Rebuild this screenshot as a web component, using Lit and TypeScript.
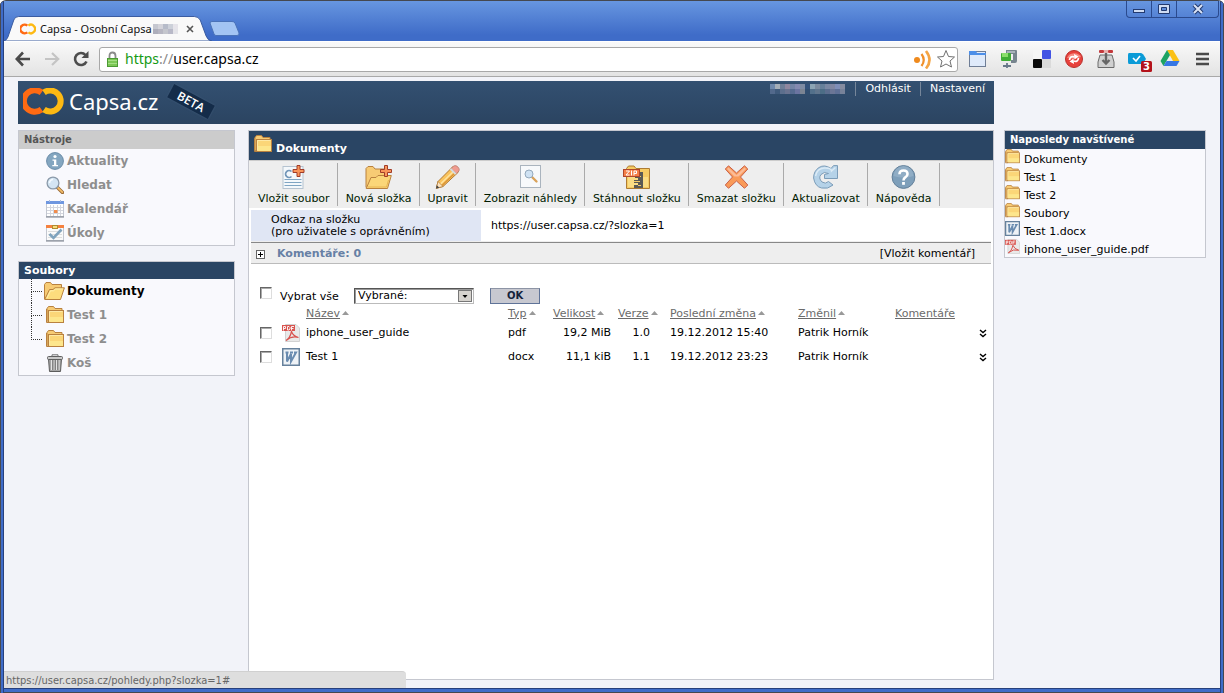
import { LitElement, html, svg, css } from "lit";
import { customElement } from "lit/decorators.js";

type Icon = keyof typeof glyphs;

const folderShape = svg`
  <path d="M1 16V2.5L2.5 .5H7.5L9 2.5H16V4" fill="#f7cb74" stroke="#b9813f"/>
  <path d="M.5 16.5V3M.5 16.5H3" stroke="#b9813f"/>
  <rect x="2.5" y="4.5" width="15" height="12" fill="#fbd678" stroke="#b9813f"/>
  <path d="M3.5 15.5V5.5H16.5" fill="none" stroke="#fee9a6"/>
  <rect x="4" y="11" width="13" height="5" fill="#fff09a" opacity=".6"/>`;

const lensShape = svg`
  <path d="M11 11L16.5 16.5" stroke="#9a6a35" stroke-width="3.4" stroke-linecap="round"/>
  <path d="M11.8 11.6L16.3 16.1" stroke="#f3bd69" stroke-width="1.8" stroke-linecap="round"/>
  <circle cx="7" cy="7" r="5.9" fill="#d4e5f3" stroke="#8b9aa9" stroke-width="1.3"/>
  <path d="M3.5 7A3.5 3.5 0 0 1 7 3.5" stroke="#f6fbff" stroke-width="1.5" fill="none"/>`;

const plusShape = svg`<path d="M15.500 .5h3v4h4v3h-4v4h-3v-4h-4v-3h4z" fill="#f9955a" stroke="#a13c28"/>`;

const glyphs = {
  folder: { box: "0 0 18 18", art: folderShape },
  open: {
    box: "0 0 21 18",
    art: svg`<path d="M.5 17V2.5L2 .5H6.500L8 2.500H17.500V7" fill="#f7cb74" stroke="#b9813f"/>
      <path d="M.7 17.500L5.500 7.500H9L11 5.800H20.400L16.500 17.500Z" fill="#fddc7d" stroke="#b9813f"/>
      <path d="M3 16L6.500 8.800H9.500L11.500 7H19" fill="none" stroke="#fff0b0"/>`,
  },
  info: {
    box: "0 0 18 18",
    art: svg`<circle cx="9" cy="9" r="8.400" fill="#84a6c0" stroke="#6a8ca8"/>
      <circle cx="9" cy="4.500" r="1.600" fill="#fff"/>
      <path d="M6.500 7.500H10.300V13H12V14.300H6.300V13H8V8.700H6.500Z" fill="#fff"/>`,
  },
  lens: { box: "0 0 18 18", art: lensShape },
  calendar: {
    box: "0 0 18 18",
    art: svg`<rect x=".5" y="1.500" width="17" height="15" fill="#fff" stroke="#c3c7d0"/>
      <rect y="1" width="18" height="3" fill="#6f97e0"/><path d="M3.500 0v2M14.500 0v2" stroke="#a8b9df"/>
      <path d="M1 7.500h16M1 10.500h16M1 13.500h16M4.500 5v11M7.500 5v11M11.500 5v11M14.500 5v11" stroke="#d4d6de"/>
      <rect x="8" y="10" width="3.500" height="3" fill="#f08b4c"/><path d="M0 17h18" stroke="#777c88"/>`,
  },
  tasks: {
    box: "0 0 18 18",
    art: svg`<rect x=".5" y="1.500" width="17" height="15" fill="#fafafa" stroke="#c3c7d0"/>
      <rect y="1" width="18" height="3" fill="#f5813f"/><path d="M2 7.500h14M2 10.500h14M2 13.500h14" stroke="#ddd"/>
      <rect x="6.500" y="1.500" width="5" height="3" fill="#f7dc7d" stroke="#b08b32"/>
      <path d="M3.500 10L7.500 14L15.500 5.500" fill="none" stroke="#7fa3bd" stroke-width="2.600"/>
      <path d="M0 17h18" stroke="#777c88"/>`,
  },
  trash: {
    box: "0 0 18 18",
    art: svg`<path d="M2.500 5H15.500L14.500 17.500H3.500Z" fill="#a5a5a5" stroke="#5c5c5c"/>
      <path d="M5.500 6v10M8 6v10M10.500 6v10M13 6v10" stroke="#e3e3e3"/>
      <path d="M6.800 6v10M9.300 6v10M11.800 6v10" stroke="#777"/>
      <rect x="1.500" y="2.500" width="15" height="3" rx="1" fill="#c9c9c9" stroke="#606060"/>
      <path d="M6 2.500V.8H12V2.500" fill="none" stroke="#707070"/>`,
  },
  upload: {
    box: "0 0 24 24",
    art: svg`<rect x="1.500" y="1.500" width="20" height="22" fill="#f4f8fb" stroke="#b5c3d0"/>
      <path d="M10 6.500A3.500 3.500 0 1 0 10 11.500" fill="none" stroke="#7296b8" stroke-width="1.700"/>
      <path d="M3 14.500h17M3 17.500h17M3 20.500h17" stroke="#7fa5c3"/>${plusShape}`,
  },
  newfolder: {
    box: "0 0 27 24",
    art: svg`<path d="M1 22.500V3.500L3 1.500H8L10 4H21V10" fill="#f7cb74" stroke="#b9813f"/>
      <path d="M1.200 23.500L6 12.500H11L13 10.500H26.300L22.500 23.500Z" fill="#fbd678" stroke="#b9813f"/>
      <path d="M3 22H21.500L23.500 15" fill="none" stroke="#e8b552"/>
      <g transform="translate(4 0)">${plusShape}</g>`,
  },
  pencil: {
    box: "0 0 24 24",
    art: svg`<path d="M.8 23.300L2.500 16.500L17.500 1.500L23 7L7.500 21.500Z" fill="#fac35c" stroke="#b07a35"/>
      <path d="M5 19L20 4.500" stroke="#fde3a0" stroke-width="1.500"/><path d="M6.500 20.500L21.500 6" stroke="#d99336" stroke-width="1.200"/>
      <path d="M15.500 3.500L18.500 .8Q20.500 0 22.500 2T23.500 6L20.800 8.700Z" fill="#f09c90" stroke="#b4786c" stroke-width=".7"/>
      <path d="M14.300 4.600L15.800 3.200L21 8.400L19.500 9.800Z" fill="#d5dbe0"/>
      <path d="M.8 23.300L2.500 16.500L7.500 21.500Z" fill="#fbe3c0" stroke="#b07a35" stroke-width=".7"/><path d="M.5 23.500L1.300 20.300L3.800 22.700Z" fill="#444"/>`,
  },
  preview: {
    box: "0 0 21 24",
    art: svg`<rect x=".5" y=".5" width="20" height="22" fill="#f7f9fb" stroke="#aab4be"/>
      <path d="M12 12L16.500 16.500" stroke="#d9a25a" stroke-width="2.400" stroke-linecap="round"/>
      <circle cx="9" cy="9" r="4" fill="#cfe2f3" stroke="#94a9bd"/>`,
  },
  zip: {
    box: "0 0 27 24",
    art: svg`<path d="M3.500 23V3.500L5.500 1H11L13 3.500H26.500V23.500H3.500Z" fill="#f6cb63" stroke="#ae7c33"/>
      <rect x="5" y="12" width="20" height="10" fill="#fbdd84"/>
      <path d="M12 7h8v16h-9v-3h4v-2h-4v-3h4v-2h-3z" fill="#5b5a55"/>
      <path d="M15 11.500h3M11 16.500h6M15 20.500h3" stroke="#f6cb63"/>
      <rect x=".5" y="4.500" width="16" height="7" fill="#f47f47" stroke="#b0472b"/>
      <path d="M3 6h3.500L3 10h3.500M8.500 5.500v5M11 10.500v-4.500h2.500v2.500h-2.500" fill="none" stroke="#fff"/>`,
  },
  cross: {
    box: "0 0 24 24",
    art: svg`<path d="M4 .8L12 8L20 .8L23.300 4L16 12L23.300 20L20 23.300L12 16L4 23.300L.8 20L8 12L.8 4Z" fill="#f99a58" stroke="#c9614a"/>
      <path d="M4 2.500L12 10L20 2.500L21.500 4L14 11.500H10L2.500 4Z" fill="#fcbc98"/>`,
  },
  refresh: {
    box: "0 0 25 24",
    art: svg`<path d="M24.500 .6V13.500H11.500V9.500L15.500 8.500Q11 6 8 9.500T9 17Q12.500 19.500 15.500 16.500L20 20Q15 24.500 8.500 23T.6 13Q.6 6 6 2.500T18 3.500L20.500 .6Z" fill="#b5d2e8" stroke="#7b9cb8"/>
      <path d="M2.500 11Q4 3.500 11 3T18.500 6L22.500 2.500" fill="none" stroke="#dcebf6" stroke-width="1.500"/>`,
  },
  help: {
    box: "0 0 24 24",
    art: svg`<circle cx="12" cy="12" r="11.400" fill="#7e9fba" stroke="#627f99"/>
      <path d="M2 11A10 10 0 0 1 22 11Q12 14 2 11Z" fill="#9db8cd" opacity=".6"/>
      <path d="M8 9.200Q8 5.500 12 5.500T16 9Q16 11 14 12.200T12 15.500" fill="none" stroke="#fff" stroke-width="2.600"/>
      <rect x="10.600" y="17" width="2.800" height="2.800" fill="#fff"/>`,
  },
  pdf: {
    box: "0 0 18 18",
    art: svg`<path d="M3.500 .5H14L17.500 4V17.500H3.500Z" fill="#e9e9e9" stroke="#d2d2d2"/>
      <path d="M4 16.500Q8 14.500 9.500 7.500Q11 12 16.500 13.500Q10 11.500 4 16.500Z" fill="none" stroke="#d8524e" stroke-width="1.200"/>
      <rect y="1" width="13" height="6" fill="#d9544f"/>
      <path d="M1.500 6.500v-4h2v2h-2M5.500 2.500v3.500h1.500l1-1v-1.500l-1-1zM9.500 6.500v-4h2.500M9.500 4.500h2" fill="none" stroke="#fff" stroke-width=".9"/>`,
  },
  word: {
    box: "0 0 18 18",
    art: svg`<rect x=".75" y=".75" width="16.500" height="16.500" fill="#eef2f6" stroke="#66819c" stroke-width="1.500"/>
      <path d="M3.500 4.500h3M5 4.500V13.500L9 6V13.500L14 4.500h-2M8 4.500h3" fill="none" stroke="#6a8cb0" stroke-width="2"/>`,
  },
};

const icon = (name: Icon, cls = "i18") =>
  html`<svg class=${cls} viewBox=${glyphs[name].box} fill="none" aria-hidden="true">${glyphs[name].art}</svg>`;

const rings = svg`
  <path d="M18.500 4.500A11 10.700 0 1 0 18.500 21.500" fill="none" stroke="#ff6a13" stroke-width="6"/>
  <path d="M21 4.500A10.500 10.500 0 1 1 21 21.500" fill="none" stroke="#fdb913" stroke-width="6"/>`;

const mosaic = (colors: string[], cols: number) => svg`${colors.map(
  (c, i) => svg`<rect x=${(i % cols) * 5} y=${Math.floor(i / cols) * 5} width="5" height="5" fill=${c}/>`
)}`;

@customElement("browser-chrome")
export class BrowserChrome extends LitElement {
  static styles = css`
    :host { display: block; font: 11px/14px "DejaVu Sans Condensed", "DejaVu Sans", sans-serif; color: #111; }
    svg { display: block; flex: none; }
    .strip { display: flex; height: 40px; background: linear-gradient(#6796e0, #3f6cc8 85%); }
    .tab { position: relative; display: flex; align-items: center; width: 208px; height: 25px; margin-top: 15px; padding: 0 18px 0 16px; box-sizing: border-box; }
    .tab > * { position: relative; }
    .tab > .shape { position: absolute; inset: 0; width: 100%; height: 100%; }
    .title { margin-left: 4px; white-space: nowrap; font: 11px/14px "Noto Sans", sans-serif; }
    .blur { margin-left: 1px; }
    button { border: 0; padding: 0; background: none; font: inherit; color: inherit; display: flex; align-items: center; justify-content: center; }
    .close { margin-left: auto; }
    .new { margin: 19px 0 0 -4px; align-self: flex-start; }
    .win { display: flex; margin-left: auto; margin-right: 1px; height: 17px; box-sizing: border-box; border: 1px solid #2a4a8e; border-top: 0; border-radius: 0 0 4px 4px; }
    .win button { width: 25px; box-sizing: border-box; border-right: 1px solid #2a4a8e; }
    .win button:last-child { width: 41px; border-right: 0; }
    .bar { display: flex; align-items: center; height: 36px; box-sizing: border-box; padding: 0 8px 0 11px; border-top: 1px solid #fff; border-bottom: 1px solid #a9a9a9; background: linear-gradient(#f9f9f9, #e3e3e3); }
    .nav { display: flex; gap: 13px; width: 84px; }
    .address { display: flex; align-items: center; flex: 1; height: 25px; box-sizing: border-box; padding: 0 1px 0 6px; border: 1px solid #a8a8a8; border-radius: 3px; background: #fff; }
    .field { display: flex; flex: 1; margin-left: 6px; font: 14px/18px "Noto Sans", sans-serif; }
    .url { color: #000; white-space: nowrap; }
    .scheme { color: #159a15; }
    .sep { color: #8a8a8a; }
    .star { margin-left: 3px; }
    .ext { display: flex; align-items: center; gap: 12px; margin-left: 10px; }
    .ext svg { overflow: visible; }
  `;
  render() {
    return html`
      <div class="strip">
        <div class="tab" role="tab">
          <svg class="shape" viewBox="0 0 212 25" preserveAspectRatio="none"><path d="M0 25Q3 24 4 21L10 4Q11 .5 15 .5H194Q198 .5 200 4L206 20Q208 25 212 25Z" fill="#f9f9f9" stroke="#3a5ba0"/></svg>
          <svg width="16" height="12" viewBox="0 0 40 26">${rings}</svg>
          <span class="title">Capsa - Osobní Capsa</span>
          <svg class="blur" width="25" height="10">
            ${mosaic(["#c5c7d0", "#d3d3da", "#b6bbc9", "#ccd0d9", "#e6e4ea", "#adaebb", "#b6b6c2", "#c4c6cd", "#b8b9c8", "#e4e4e9"], 5)}
          </svg>
          <button class="close" aria-label="Zavřít kartu"><svg width="8" height="8"><path d="M1 1L7 7M7 1L1 7" stroke="#555" stroke-width="1.600"/></svg></button>
        </div>
        <button class="new" aria-label="Nová karta"><svg width="32" height="17"><path d="M2 3Q2 1.500 4 1.500H24Q26 1.500 27 3L31 13Q31.500 15.500 29 15.500H8Q6.500 15.500 6 14Z" fill="#a3c4f3" stroke="#4a72b8"/></svg></button>
        <div class="win">
          <button aria-label="Minimalizovat"><svg width="12" height="12"><rect x=".5" y="6.500" width="11" height="3" fill="#cfdcf3" stroke="#223a70"/></svg></button>
          <button aria-label="Maximalizovat"><svg width="12" height="12"><path d="M.5 1.500h11v9H.5zM3.500 4.500v3h5v-3z" fill="#cfdcf3" fill-rule="evenodd" stroke="#223a70"/></svg></button>
          <button aria-label="Zavřít"><svg width="12" height="12"><path d="M2 2L10 10M10 2L2 10" stroke="#223a70" stroke-width="4"/><path d="M2 2L10 10M10 2L2 10" stroke="#d9e3f6" stroke-width="2"/></svg></button>
        </div>
      </div>
      <div class="bar">
        <div class="nav">
          <button aria-label="Zpět"><svg width="16" height="16"><path d="M15 8H2M8 1.500L1.800 8L8 14.500" fill="none" stroke="#4a4a4a" stroke-width="2.600"/></svg></button>
          <button aria-label="Vpřed"><svg width="16" height="16"><path d="M1 8H14M8 2L14.200 8L8 14" fill="none" stroke="#c4c4c4" stroke-width="2.200"/></svg></button>
          <button aria-label="Obnovit"><svg width="16" height="16"><path d="M13.500 10.500A6 6 0 1 1 12.500 4" fill="none" stroke="#4d4d4d" stroke-width="2.600"/><path d="M15.500 0V7H8.500Z" fill="#4d4d4d"/></svg></button>
        </div>
        <div class="address">
          <svg width="13" height="17"><path d="M3.500 8V5Q3.500 1.500 6.500 1.500T9.500 5V8" fill="none" stroke="#8b8b8b" stroke-width="1.800"/><rect x="1.500" y="7.500" width="10" height="8" fill="#7cc856" stroke="#4c9a34"/><path d="M2 9.500h9M2 12.500h9" stroke="#a5df85"/></svg>
          <div class="field"><span class="url"><span class="scheme">https</span><span class="sep">://</span>user.capsa.cz</span></div>
          <svg width="20" height="20"><circle cx="4" cy="11" r="3" fill="#ef8a1d"/><path d="M8.500 5Q13 11 8.500 17" fill="none" stroke="#f0902a" stroke-width="2.200"/><path d="M13 2Q20 11 13 19.500" fill="none" stroke="#f4a444" stroke-width="2.600"/></svg>
          <button class="star" aria-label="Přidat záložku"><svg width="20" height="20"><path d="M10 1.500L12.500 7.500L18.500 8L14 12L15.500 18L10 15L4.500 18L6 12L1.500 8L7.500 7.500Z" fill="#fff" stroke="#707070"/></svg></button>
        </div>
        <div class="ext">
          <svg width="20" height="20"><rect x="1.500" y="2.500" width="16" height="15" fill="#dfeafa" stroke="#6f7e96"/><path d="M1 2h7l1 2h9v2H1z" fill="#4d8fe8"/></svg>
          <svg width="20" height="20"><path d="M6 1h10q1 0 1 1v10q0 2-2 2h-4v-3h2V5H6z" fill="#77858f"/><path d="M7 2h8v2H7z" fill="#a9b4bb"/><rect x="1" y="4" width="10" height="8" rx="1" fill="#3fae35"/><rect x="2" y="4" width="6" height="4" fill="#8ade6b"/><path d="M3 17h8M7 14v5" stroke="#68788a" stroke-width="1.800"/></svg>
          <svg width="20" height="20"><rect x="1" y="1" width="9" height="9" fill="#f5f5f5"/><rect x="10" y="10" width="9" height="9" fill="#dadada"/><rect x="1" y="10" width="9" height="9" rx="1" fill="#0a0a0a"/><rect x="10" y="1" width="9" height="9" rx="1" fill="#4254e4"/></svg>
          <svg width="20" height="20"><circle cx="10" cy="10" r="8.500" fill="#e8413c" stroke="#b9302c"/><path d="M3 9A8 8 0 0 1 17 8Q10 11 3 9Z" fill="#f58a80"/><path d="M5.500 11Q6 6.500 10.500 8M14.500 9Q14 13.500 9.500 12" fill="none" stroke="#fff" stroke-width="1.800"/><path d="M10 5l4.500 2.500-4 3zM10 15l-4.500-2.500 4-3z" fill="#fff"/></svg>
          <svg width="20" height="20"><path d="M4 6h12l2 7v5.500H2V13z" fill="#d0d0d0" stroke="#6b6b6b"/><rect x="3" y="1" width="5" height="3" rx="1" fill="#c3383b"/><rect x="12" y="1" width="5" height="3" rx="1" fill="#c3383b"/><rect x="8" y="1" width="4" height="3" fill="#e9b0ae"/><path d="M10 4v10M6.500 11L10 14.500L13.500 11" fill="none" stroke="#666" stroke-width="2.400"/></svg>
          <svg width="20" height="20"><path d="M1 4h12q2 0 5 6-3 5-5 5H1Q0 15 0 13V6Q0 4 1 4z" fill="#0b9bd7"/><path d="M5 9l3 3 4-5" fill="none" stroke="#fff" stroke-width="1.600"/><rect x="13" y="12" width="11" height="11" rx="1.500" fill="#b3121b"/><text x="15" y="21" fill="#fff" font-size="10" font-weight="700" font-family="DejaVu Sans">3</text></svg>
          <svg width="20" height="20"><path d="M7 1h6l6.500 11h-6.500z" fill="#fbc116"/><path d="M7 1L.5 12l3 5L10 6z" fill="#1da362"/><path d="M6.500 12h13l-3 5h-13z" fill="#3777e3"/></svg>
          <button aria-label="Nabídka"><svg width="20" height="20"><path d="M4 5h13M4 10h13M4 15h13" stroke="#4a4a4a" stroke-width="2.600"/></svg></button>
        </div>
      </div>`;
  }
}

const tools: { icon: Icon; label: string }[] = [
  { icon: "info", label: "Aktuality" },
  { icon: "lens", label: "Hledat" },
  { icon: "calendar", label: "Kalendář" },
  { icon: "tasks", label: "Úkoly" },
];
const actions: { icon: Icon; label: string }[] = [
  { icon: "upload", label: "Vložit soubor" },
  { icon: "newfolder", label: "Nová složka" },
  { icon: "pencil", label: "Upravit" },
  { icon: "preview", label: "Zobrazit náhledy" },
  { icon: "zip", label: "Stáhnout složku" },
  { icon: "cross", label: "Smazat složku" },
  { icon: "refresh", label: "Aktualizovat" },
  { icon: "help", label: "Nápověda" },
];
const recent: { icon: Icon; label: string }[] = [
  { icon: "folder", label: "Dokumenty" },
  { icon: "folder", label: "Test 1" },
  { icon: "folder", label: "Test 2" },
  { icon: "folder", label: "Soubory" },
  { icon: "word", label: "Test 1.docx" },
  { icon: "pdf", label: "iphone_user_guide.pdf" },
];
const columns = ["Název", "Typ", "Velikost", "Verze", "Poslední změna", "Změnil"];
const files: { icon: Icon; name: string; type: string; size: string; version: string; date: string; by: string }[] = [
  { icon: "pdf", name: "iphone_user_guide", type: "pdf", size: "19,2 MiB", version: "1.0", date: "19.12.2012 15:40", by: "Patrik Horník" },
  { icon: "word", name: "Test 1", type: "docx", size: "11,1 kiB", version: "1.1", date: "19.12.2012 23:23", by: "Patrik Horník" },
];

@customElement("app-root")
export class AppRoot extends LitElement {
  static styles = css`
    :host { display: flex; flex-direction: column; position: relative; min-height: 100vh; box-sizing: border-box; padding: 0 4px 5px 4px; border-top: 1px solid #45484f; border-radius: 6px 6px 0 0;
      background: linear-gradient(90deg, #4a4a50 1px, #3f6cc8 1px, #3f6cc8 3px, #27407c 3px, #27407c 4px, transparent 4px, transparent calc(100% - 4px), #27407c calc(100% - 4px), #27407c calc(100% - 3px), #3f6cc8 calc(100% - 3px), #3f6cc8 calc(100% - 1px), #45484f calc(100% - 1px)), linear-gradient(0deg, #45484f 1px, #3f6cc8 1px, #3f6cc8 4px, #27407c 4px);
      font: 11px/14px "DejaVu Sans", Verdana, sans-serif; color: #000; }
    svg { display: block; flex: none; }
    a { color: inherit; text-decoration: none; }
    .i18 { width: 18px; height: 18px; }
    .i15 { width: 15px; height: 15px; }
    .i21 { width: 21px; height: 18px; }
    .i24 { width: 27px; height: 24px; }
    .page { flex: 1; display: grid; grid-template-columns: 220px 1fr 202px; grid-template-rows: auto 1fr; column-gap: 10px; row-gap: 6px; padding: 4px 14px 8px; background: #f2f3f9; }
    .head { grid-column: 1 / 3; grid-row: 1; display: flex; height: 43px; background: linear-gradient(#335071, #2b4461); color: #fff; }
    .side { grid-column: 1; grid-row: 2; display: flex; flex-direction: column; gap: 15px; padding-right: 3px; }
    .main { grid-column: 2; grid-row: 2; }
    .right { grid-column: 3; grid-row: 2; }
    .logo { margin: 7px 0 0 5px; }
    .brand { margin: 4px 0 0 5px; font: 22px/32px "Noto Sans", "Open Sans", sans-serif; }
    .beta { width: 46px; height: 15px; margin: 13px 0 0 10px; background: #142c49; box-shadow: 0 0 2px #46607f; transform: rotate(28deg); text-align: center; font: 600 12px/15px "Open Sans", sans-serif; }
    .user { display: flex; margin: 1px 0 0 auto; height: 14px; }
    .user a { padding: 0 9px; border-left: 1px solid #76869a; }
    .hidden-name { margin: 2px 10px 0 0; }
    .panel { border: 1px solid #c5c7cf; background: #f9f9fd; }
    .panel h2 { margin: 0; padding-left: 5px; font: 700 11px/17px "DejaVu Sans", sans-serif; color: #fff; background: #2a4564; }
    .panel h2.small { font-size: 10px; line-height: 18px; }
    .panel h2.pale { background: #ccc; color: #555; }
    .list { list-style: none; margin: 0; padding: 0 0 0 27px; font-size: 12px; font-weight: 700; color: #8e8e8e; }
    .list a { display: flex; align-items: center; gap: 3px; height: 24px; }
    .list .on { color: #000; margin-left: -2px; gap: 2px; }
    .tree li { position: relative; }
    .tree .node::before { content: ""; position: absolute; left: -15px; top: 0; width: 10px; height: 12px; border-left: 1px dotted #333; border-bottom: 1px dotted #333; }
    .tree .more::after { content: ""; position: absolute; left: -15px; top: 12px; height: 12px; border-left: 1px dotted #333; }
    .main { border: 1px solid #c5c7cf; background: #fff; }
    .main h1 { display: flex; gap: 4px; margin: 0; height: 29px; box-sizing: border-box; padding: 4px 5px; font: 700 11px/28px "DejaVu Sans", sans-serif; background: #2a4564; color: #fff; }
    .actions { display: flex; height: 48px; box-sizing: border-box; padding: 2px 1px; background: #eee; border-top: 1px solid #ccc; }
    .actions button { display: flex; flex-direction: column; align-items: center; gap: 3px; padding: 2px 7px 0 8px; border: 0; border-right: 1px solid #aaa; background: none; font: inherit; color: #001a00; white-space: nowrap; }
    .body { padding: 2px 2px 0; }
    .link { display: grid; grid-template-columns: 230px 1fr; align-items: center; margin: 0; line-height: 12px; border-bottom: 1px solid #eee; }
    .link dt { padding: 4px 20px 3px; background: #e0e6f4; white-space: nowrap; }
    .link dd { margin: 0; padding-left: 10px; }
    .comments { display: flex; align-items: center; height: 22px; box-sizing: border-box; padding: 2px 16px 0 5px; margin-bottom: 23px; border-top: 1px solid #888; border-bottom: 1px solid #bbb; background: #eee; }
    .comments h2 { margin: 0 auto 0 12px; font: 700 11px/14px "DejaVu Sans", sans-serif; color: #6780a5; }
    .plus { padding: 0; border: 0; background: none; }
    .pick { display: flex; align-items: flex-start; height: 19px; padding-left: 9px; }
    input { appearance: none; display: block; flex: none; width: 12px; height: 12px; margin: 0; box-sizing: border-box; border: 1px solid; border-color: #666 #ddd #ddd #666; background: #fff; box-shadow: inset 1px 1px #aaa; }
    .pick label { width: 74px; margin-left: 8px; line-height: 20px; }
    .drop { position: relative; width: 120px; margin-top: 1px; }
    .drop svg { position: absolute; right: 2px; top: 2px; pointer-events: none; }
    select { appearance: none; display: block; width: 100%; height: 16px; box-sizing: border-box; margin: 0; padding: 0 3px; border: 1px solid; border-color: #555 #bbb #bbb #555; border-radius: 0; background: #fff; font: 11px/14px "DejaVu Sans", sans-serif; color: #000; box-shadow: inset 1px 1px #999; }
    .ok { width: 50px; height: 16px; margin: 1px 0 0 16px; padding: 0; border: 1px solid #5f7398; border-top-color: #8d94a5; background: #c7c8d0; font: 700 10px/14px "DejaVu Sans", sans-serif; color: #14233c; }
    table { width: 100%; border-collapse: collapse; table-layout: fixed; }
    th, td { padding: 0; text-align: left; font-weight: 400; white-space: nowrap; line-height: 14px; height: 24px; }
    thead th { height: 15px; }
    thead { color: #6b6b6b; }
    thead a { text-decoration: underline; }
    thead svg { display: inline-block; margin-left: 2px; vertical-align: 2px; }
    .c-check { width: 31px; } .c-icon { width: 24px; } .c-name { width: 202px; } .c-type { width: 45px; } .c-size { width: 65px; } .c-ver { width: 52px; } .c-date { width: 128px; } .c-by { width: 97px; } .c-more { width: 12px; }
    .check { padding-left: 9px; }
    .size { text-align: right; padding-right: 7px; }
    .ver { text-align: right; padding-right: 20px; }
    .recent { list-style: none; margin: 0; padding: 0; }
    .recent a { display: flex; gap: 4px; height: 18px; line-height: 21px; }
    .status { position: absolute; left: 4px; bottom: 5px; width: 402px; height: 17px; box-sizing: border-box; padding-left: 2px; border-top: 1px solid #d0d0d0; border-radius: 0 4px 0 0; background: #dedede; color: #666; font: 11px/17px "DejaVu Sans Condensed", "DejaVu Sans", sans-serif; }
  `;

  render() {
    return html`
      <browser-chrome></browser-chrome>
      <div class="page">
        <header class="head">
          <svg class="logo" width="41" height="27" viewBox="0 0 41 27">${rings}</svg>
          <span class="brand">Capsa.cz</span>
          <span class="beta">BETA</span>
          <nav class="user">
            <svg class="hidden-name" width="75" height="10">
              ${mosaic(["#6f89ad", "#a5aeb8", "#6f7e98", "#8f869f", "#7484a6", "#8489b0", "#7f8ca3", "#34527a", "#8ca4b4", "#7c8b9f", "#66809a", "#7a88a3", "#8087a3", "#7f8eb8", "#848b9f",
                "#52698c", "#3f5a7c", "#5d6f8d", "#6a7390", "#566b90", "#6b74a0", "#7b8493", "#314e70", "#53708b", "#60758d", "#4c6d86", "#5b6d8e", "#6b7696", "#5f7096", "#778299"], 15)}
            </svg>
            <a href="#">Odhlásit</a><a href="#">Nastavení</a>
          </nav>
        </header>
        <aside class="side">
          <section class="panel">
            <h2 class="small pale">Nástroje</h2>
            <ul class="list">${tools.map((t) => html`<li><a href="#">${icon(t.icon)}${t.label}</a></li>`)}</ul>
          </section>
          <section class="panel">
            <h2>Soubory</h2>
            <ul class="list tree">
              <li class="node more"><a class="on" href="#">${icon("open", "i21")}Dokumenty</a></li>
              <li class="node more"><a href="#">${icon("folder")}Test 1</a></li>
              <li class="node"><a href="#">${icon("folder")}Test 2</a></li>
              <li><a href="#">${icon("trash")}Koš</a></li>
            </ul>
          </section>
        </aside>
        <main class="main">
          <h1>${icon("folder")}Dokumenty</h1>
          <div class="actions">${actions.map((a) => html`<button>${icon(a.icon, "i24")}${a.label}</button>`)}</div>
          <div class="body">
            <dl class="link"><dt>Odkaz na složku<br />(pro uživatele s oprávněním)</dt><dd>https://user.capsa.cz/?slozka=1</dd></dl>
            <div class="comments">
              <button class="plus" aria-label="Rozbalit komentáře"><svg width="9" height="9"><rect x=".5" y=".5" width="8" height="8" fill="#fff" stroke="#666"/><path d="M2 4.500h5M4.500 2v5" stroke="#000"/></svg></button>
              <h2>Komentáře: 0</h2>
              <a href="#">[Vložit komentář]</a>
            </div>
            <div class="pick">
              <input type="checkbox" id="all" /><label for="all">Vybrat vše</label>
              <div class="drop">
                <select aria-label="Akce s vybranými"><option>Vybrané:</option></select>
                <svg width="14" height="12"><rect x=".5" y=".5" width="13" height="11" fill="#d6d3ce" stroke="#777"/><path d="M4.500 5h5L7 8z" fill="#000"/></svg>
              </div>
              <button class="ok">OK</button>
            </div>
            <table>
              <colgroup><col class="c-check" /><col class="c-icon" /><col class="c-name" /><col class="c-type" /><col class="c-size" /><col class="c-ver" /><col class="c-date" /><col class="c-by" /><col /><col class="c-more" /></colgroup>
              <thead><tr><th></th><th></th>
                ${columns.map((c) => html`<th><a href="#">${c}</a><svg width="7" height="4"><path d="M0 4L3.500 0L7 4z" fill="#999"/></svg></th>`)}
                <th><a href="#">Komentáře</a></th><th></th></tr></thead>
              <tbody>${files.map((f) => html`<tr>
                <td class="check"><input type="checkbox" aria-label=${f.name} /></td><td>${icon(f.icon)}</td><td>${f.name}</td><td>${f.type}</td>
                <td class="size">${f.size}</td><td class="ver">${f.version}</td><td>${f.date}</td><td>${f.by}</td><td></td>
                <td><svg width="8" height="9"><path d="M1 1l3 2.500L7 1M1 5l3 2.500L7 5" fill="none" stroke="#000" stroke-width="1.400"/></svg></td></tr>`)}</tbody>
            </table>
          </div>
        </main>
        <aside class="right">
          <section class="panel">
            <h2 class="small">Naposledy navštívené</h2>
            <ul class="recent">${recent.map((r) => html`<li><a href="#">${icon(r.icon, "i15")}${r.label}</a></li>`)}</ul>
          </section>
        </aside>
      </div>
      <div class="status">https://user.capsa.cz/pohledy.php?slozka=1#</div>`;
  }
}
